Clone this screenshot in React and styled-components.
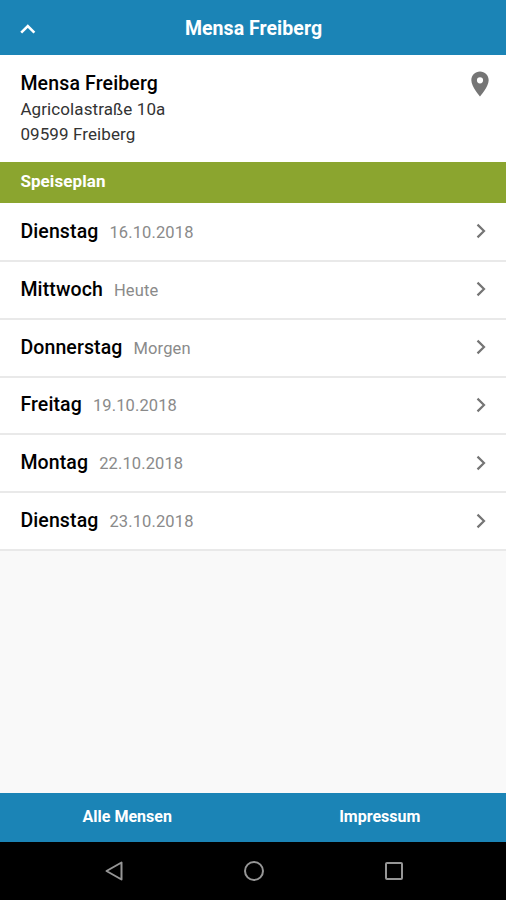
import React from 'react';
import styled, { createGlobalStyle } from 'styled-components';

const GlobalStyle = createGlobalStyle`
  body {
    margin: 0;
    background: #f9f9f9;
    font-family: Roboto, sans-serif;
  }
`;

const Screen = styled.div`
  height: 100vh;
  display: flex;
  flex-direction: column;
  overflow: hidden;
`;

const Header = styled.header`
  height: 55px;
  flex-shrink: 0;
  display: grid;
  grid-template-columns: 56px 1fr 55px;
  align-items: center;
  color: #fff;
  background: #1b84b6;
`;

const BackIcon = styled.svg`
  width: 16px;
  height: 10px;
  margin-left: 20px;
  margin-top: 3px;
`;

const HeaderTitle = styled.h1`
  margin: 2px 0 0;
  font-size: 19.5px;
  line-height: 24px;
  font-weight: 700;
  letter-spacing: 0.05px;
  text-align: center;
`;

const Address = styled.section`
  height: 107px;
  flex-shrink: 0;
  box-sizing: border-box;
  padding: 16px 15px 0 20.4px;
  display: flex;
  justify-content: space-between;
  align-items: flex-start;
  background: #fff;
`;

const MensaName = styled.h2`
  margin: 0;
  font-size: 19.5px;
  line-height: 26px;
  font-weight: 500;
  letter-spacing: 0.15px;
  color: #000;
`;

const AddressLine = styled.div`
  font-size: 17px;
  line-height: 24.5px;
  letter-spacing: 0.1px;
  color: #333;
`;

const PinIcon = styled.svg`
  width: 22px;
  height: 26px;
`;

const SectionTitle = styled.div`
  height: 41px;
  flex-shrink: 0;
  box-sizing: border-box;
  padding-left: 20.4px;
  font-size: 17px;
  line-height: 39px;
  font-weight: 700;
  letter-spacing: 0.08px;
  color: #fff;
  background: #8ba52f;
`;

const DayList = styled.ul`
  list-style: none;
  padding: 1px 0 0;
  margin: 0;
  background: #fff;
`;

const DayItem = styled.li`
  height: 57.85px;
  box-sizing: border-box;
  padding: 0 20.5px 0 20.4px;
  display: flex;
  align-items: center;
  background: #fff;
  border-bottom: 2px solid #e9e9e9;
`;

const DayName = styled.span`
  font-size: 19.5px;
  line-height: 24px;
  font-weight: 500;
  letter-spacing: 0.12px;
  color: #000;
`;

const DayDate = styled.span`
  flex: 1;
  margin-left: 11px;
  margin-top: 2px;
  font-size: 16.5px;
  line-height: 24px;
  letter-spacing: 0.12px;
  color: #8a8a8a;
`;

const ArrowIcon = styled.svg`
  width: 10px;
  height: 16px;
  margin-bottom: 1px;
`;

const Footer = styled.footer`
  height: 49px;
  flex-shrink: 0;
  box-sizing: border-box;
  margin-top: auto;
  padding-left: 1px;
  display: flex;
  background: #1b84b6;
`;

const FooterLink = styled.div`
  flex: 1;
  font-size: 16px;
  line-height: 47px;
  font-weight: 700;
  text-align: center;
  color: #fff;
`;

const NavBar = styled.nav`
  height: 58px;
  flex-shrink: 0;
  box-sizing: border-box;
  padding-left: 1px;
  display: flex;
  justify-content: center;
  align-items: center;
  gap: 116px;
  background: #000;
`;

const NavIcon = styled.svg`
  width: 24px;
  height: 24px;
  fill: none;
  stroke: #969696;
  stroke-width: 2;
`;

const days = [
  { name: 'Dienstag', date: '16.10.2018' },
  { name: 'Mittwoch', date: 'Heute' },
  { name: 'Donnerstag', date: 'Morgen' },
  { name: 'Freitag', date: '19.10.2018' },
  { name: 'Montag', date: '22.10.2018' },
  { name: 'Dienstag', date: '23.10.2018' },
];

const App = () => (
  <Screen>
    <GlobalStyle />
    <Header>
      <BackIcon viewBox="0 0 16 10" fill="none" stroke="#fff" strokeWidth="2.6">
        <path d="M1.2 8.6 L7.8 2 L14.4 8.6" />
      </BackIcon>
      <HeaderTitle>Mensa Freiberg</HeaderTitle>
    </Header>
    <Address>
      <div>
        <MensaName>Mensa Freiberg</MensaName>
        <AddressLine>Agricolastraße 10a</AddressLine>
        <AddressLine>09599 Freiberg</AddressLine>
      </div>
      <PinIcon viewBox="4 1.5 16 21" fill="#757575">
        <path d="M12 2C8.13 2 5 5.13 5 9c0 5.25 7 13 7 13s7-7.75 7-13c0-3.87-3.13-7-7-7zm0 9.5a2.5 2.5 0 0 1 0-5 2.5 2.5 0 0 1 0 5z" />
      </PinIcon>
    </Address>
    <SectionTitle>Speiseplan</SectionTitle>
    <DayList>
      {days.map((day, index) => (
        <DayItem key={index}>
          <DayName>{day.name}</DayName>
          <DayDate>{day.date}</DayDate>
          <ArrowIcon viewBox="0 0 10 16" fill="none" stroke="#757575" strokeWidth="2.2">
            <path d="M1.5 1.6 L8 8 L1.5 14.4" />
          </ArrowIcon>
        </DayItem>
      ))}
    </DayList>
    <Footer>
      <FooterLink>Alle Mensen</FooterLink>
      <FooterLink>Impressum</FooterLink>
    </Footer>
    <NavBar>
      <NavIcon viewBox="0 0 24 24">
        <path d="M19.5 3.5 V20.5 L4.5 12 Z" strokeLinejoin="round" />
      </NavIcon>
      <NavIcon viewBox="0 0 24 24">
        <circle cx="12" cy="12" r="9" />
      </NavIcon>
      <NavIcon viewBox="0 0 24 24">
        <rect x="4" y="4" width="16" height="16" rx="1" />
      </NavIcon>
    </NavBar>
  </Screen>
);

export default App;
